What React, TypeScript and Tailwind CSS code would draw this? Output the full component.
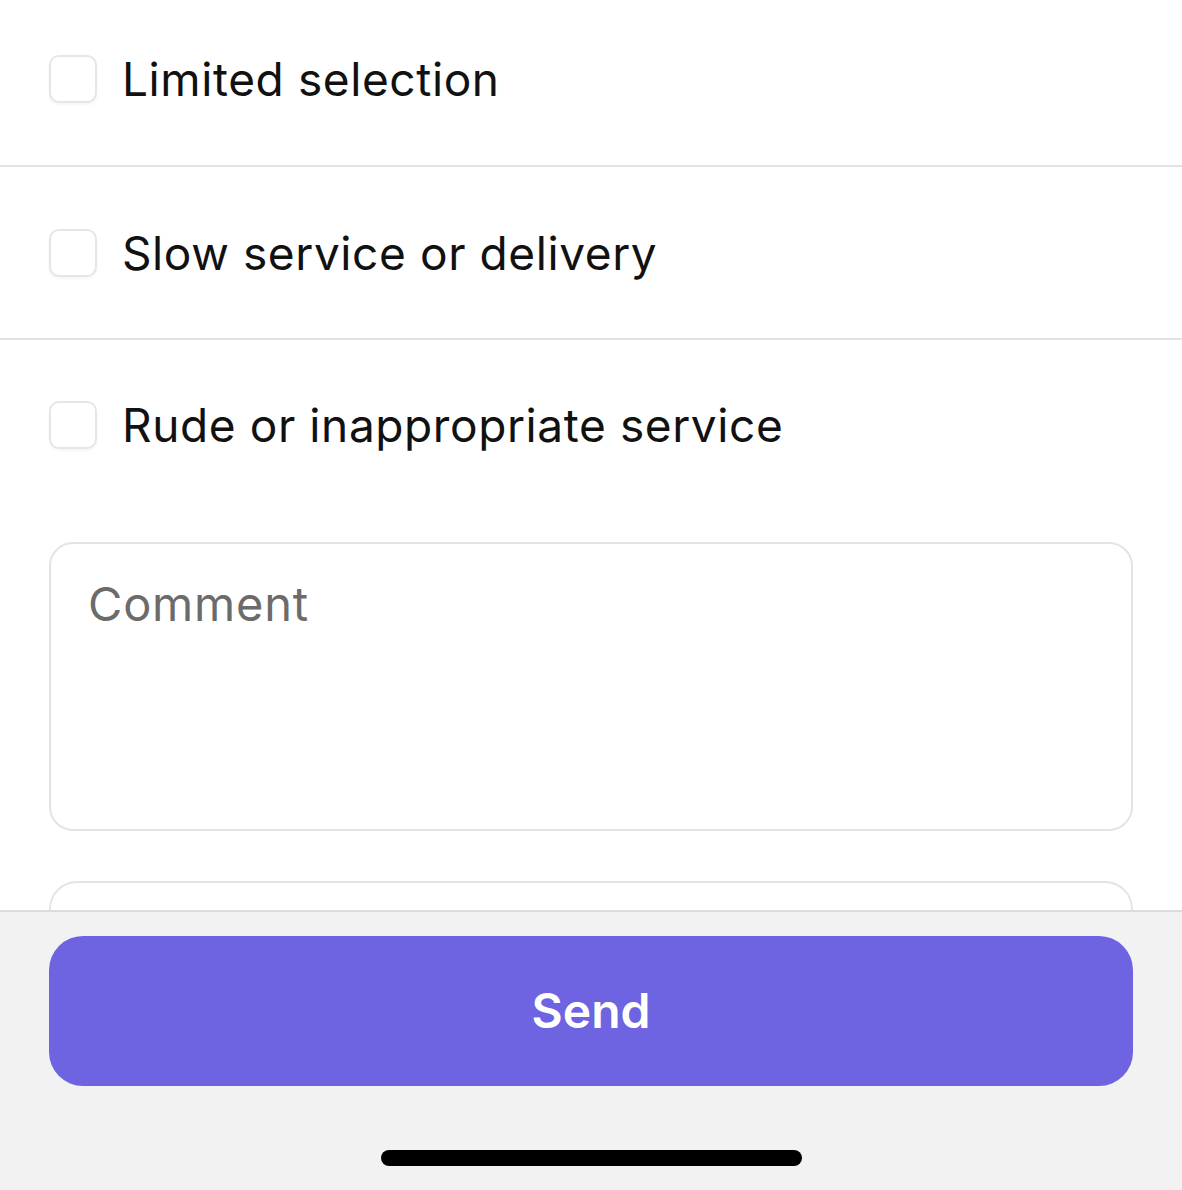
import { useState } from 'react';

const reasons = ['Limited selection', 'Slow service or delivery', 'Rude or inappropriate service'];

function CheckRow({ label, first, last }: { label: string; first?: boolean; last?: boolean }) {
  const [checked, setChecked] = useState(false);
  return (
    <div
      className={
        'flex items-center gap-[25px] px-[49px] ' +
        (first ? 'h-[167px] pb-[7px] border-b-2 border-[#e2e2e2]' : last ? 'h-[170px]' : 'h-[173px] border-b-2 border-[#e2e2e2]')
      }
    >
      <button
        type="button"
        onClick={() => setChecked(!checked)}
        className="w-[48px] h-[48px] shrink-0 rounded-[10px] border-2 border-[#e6e6e6] bg-white shadow-[0_2px_3px_rgba(0,0,0,0.04)]"
      >
        {checked && <span className="block w-full h-full rounded-[8px] bg-[#6e63e0]" />}
      </button>
      <span className="text-[46px] leading-none text-[#111] tracking-[0.6px]">{label}</span>
    </div>
  );
}

export default function App() {
  const [comment, setComment] = useState('');

  return (
    <div className="w-[1182px] h-[1190px] flex flex-col bg-white overflow-hidden" style={{ fontFamily: 'Inter, "Noto Sans", sans-serif' }}>
      {/* スクロール領域 */}
      <div className="h-[910px] overflow-hidden shrink-0">
        {reasons.map((r, i) => (
          <CheckRow key={r} label={r} first={i === 0} last={i === reasons.length - 1} />
        ))}
        <div className="px-[49px] pt-[32px]">
          <textarea
            value={comment}
            onChange={(e) => setComment(e.target.value)}
            placeholder="Comment"
            className="block w-full h-[289px] resize-none rounded-[24px] border-2 border-[#e4e4e4] px-[37px] pt-[32px] text-[47px] leading-[56px] tracking-[0.8px] text-[#111] placeholder:text-[#6b6b6b] outline-none"
          />
          <div className="mt-[50px] h-[80px] rounded-[28px] border-2 border-[#e4e4e4]" />
        </div>
      </div>

      {/* フッター */}
      <div className="flex-1 flex flex-col items-center bg-[#f2f2f2] border-t-2 border-[#dcdcdc]">
        <button
          type="button"
          className="mt-[24px] w-[1084px] h-[150px] rounded-[34px] bg-[#6e63e0] text-white text-[48px] font-semibold"
        >
          Send
        </button>
        <div className="mt-[64px] w-[421px] h-[16px] rounded-full bg-black" />
      </div>
    </div>
  );
}
